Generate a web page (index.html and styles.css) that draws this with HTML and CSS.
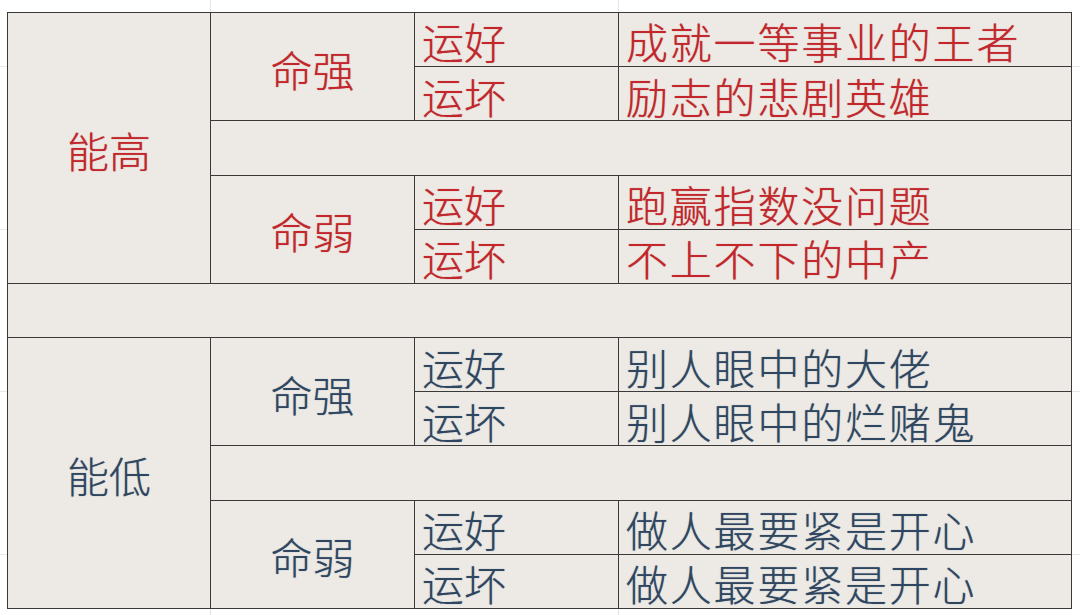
FILE: index.html
```html
<!DOCTYPE html>
<html lang="zh-CN">
<head>
<meta charset="utf-8">
<title>能高 能低</title>
<link rel="stylesheet" href="styles.css">
</head>
<body>
<div class="sheet">
  <div class="grid">
    <div class="cell lvl1 red r5">能高</div>
    <div class="cell lvl2 red r2">命强</div>
    <div class="cell lvl3 red">运好</div>
    <div class="cell lvl4 red">成就一等事业的王者</div>
    <div class="cell lvl3 red">运坏</div>
    <div class="cell lvl4 red">励志的悲剧英雄</div>
    <div class="cell blank span3"></div>
    <div class="cell lvl2 red r2">命弱</div>
    <div class="cell lvl3 red">运好</div>
    <div class="cell lvl4 red">跑赢指数没问题</div>
    <div class="cell lvl3 red">运坏</div>
    <div class="cell lvl4 red">不上不下的中产</div>

    <div class="cell blank span4"></div>

    <div class="cell lvl1 blue r5">能低</div>
    <div class="cell lvl2 blue r2">命强</div>
    <div class="cell lvl3 blue">运好</div>
    <div class="cell lvl4 blue">别人眼中的大佬</div>
    <div class="cell lvl3 blue">运坏</div>
    <div class="cell lvl4 blue">别人眼中的烂赌鬼</div>
    <div class="cell blank span3"></div>
    <div class="cell lvl2 blue r2">命弱</div>
    <div class="cell lvl3 blue">运好</div>
    <div class="cell lvl4 blue">做人最要紧是开心</div>
    <div class="cell lvl3 blue">运坏</div>
    <div class="cell lvl4 blue">做人最要紧是开心</div>
  </div>
</div>
</body>
</html>
```
FILE: styles.css
```css
html, body {
  margin: 0;
  padding: 0;
}

body {
  width: 1080px;
  height: 615px;
  overflow: hidden;
  background-color: #ffffff;
  background-image:
    linear-gradient(to right, transparent 210px, #e4e4e4 210px, #e4e4e4 211px, transparent 211px),
    linear-gradient(to right, transparent 618px, #e4e4e4 618px, #e4e4e4 619px, transparent 619px),
    linear-gradient(to bottom, transparent 66px, #e8e8e8 66px, #e8e8e8 67px, transparent 67px),
    linear-gradient(to bottom, transparent 229px, #e8e8e8 229px, #e8e8e8 230px, transparent 230px),
    linear-gradient(to bottom, transparent 391px, #e8e8e8 391px, #e8e8e8 392px, transparent 392px),
    linear-gradient(to bottom, transparent 554px, #e8e8e8 554px, #e8e8e8 555px, transparent 555px);
  font-family: "Noto Sans CJK SC", "Noto Sans", sans-serif;
}

.sheet {
  padding: 12px 0 0 7px;
}

.grid {
  display: grid;
  grid-template-columns: 202px 203px 203px 452px;
  grid-template-rows: repeat(11, 1fr);
  gap: 1px;
  padding: 1px;
  background: #3a3a3a;
  box-sizing: border-box;
  width: 1065px;
  height: 597px;
}

.cell {
  background: #edeae5;
  display: flex;
  align-items: center;
  font-size: 42px;
  font-weight: 300;
  line-height: 1.15;
  padding-top: 4px;
  box-sizing: border-box;
  white-space: nowrap;
}

.red {
  color: #c3262b;
  text-shadow: 0 0 1px rgba(150, 20, 25, 0.6);
}

.blue {
  color: #2f4661;
  text-shadow: 0 0 1px rgba(30, 50, 80, 0.55);
}

.lvl1, .lvl2 {
  justify-content: center;
}

.lvl3 {
  padding-left: 7px;
}

.lvl4 {
  padding-left: 7px;
  letter-spacing: 1.8px;
}

.r5 {
  grid-row: span 5;
}

.r2 {
  grid-row: span 2;
}

.span3 {
  grid-column: span 3;
}

.span4 {
  grid-column: span 4;
}
```
